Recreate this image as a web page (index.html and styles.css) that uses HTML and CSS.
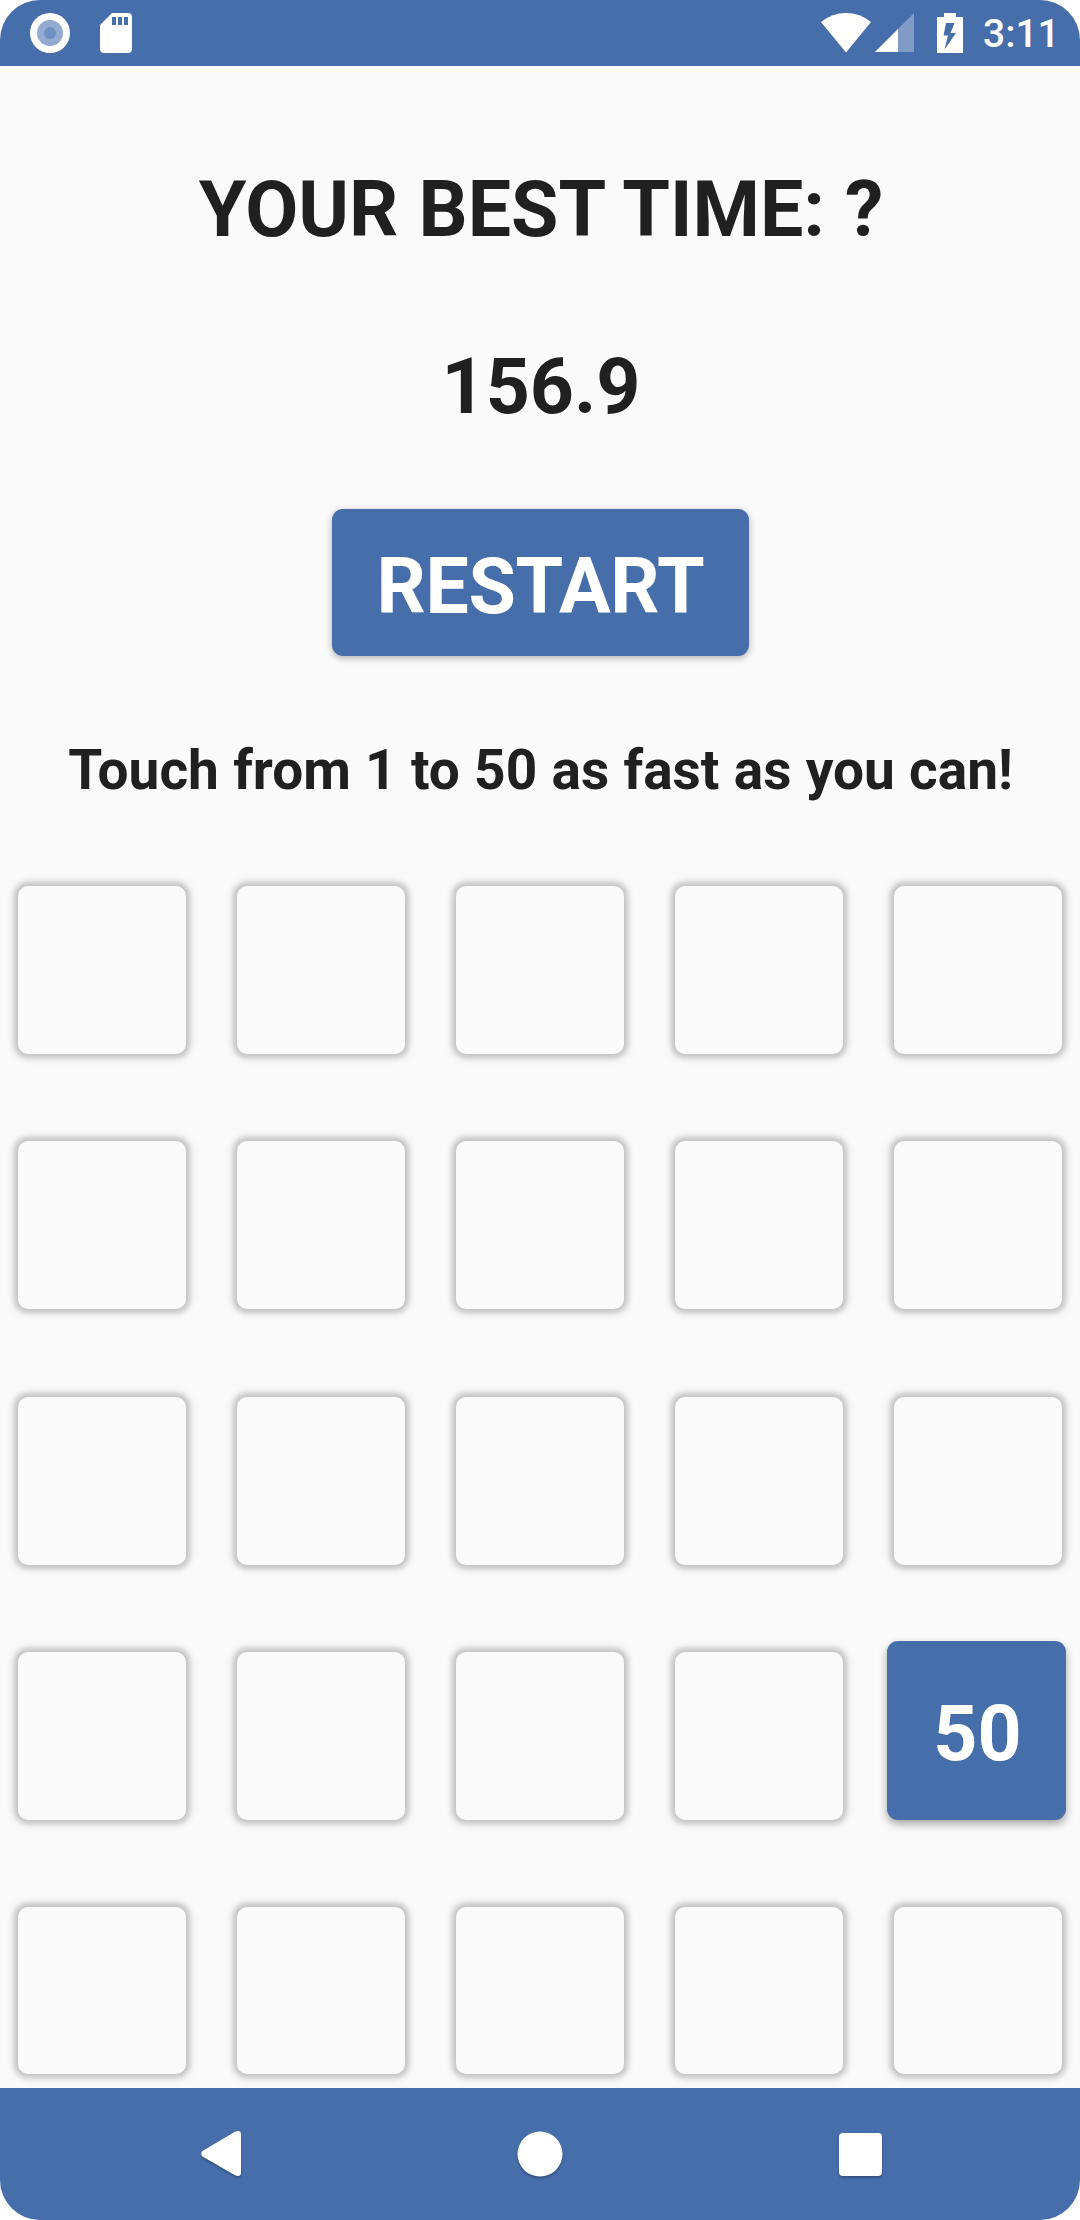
FILE: index.html
```html
<!DOCTYPE html>
<html lang="en">
<head>
<meta charset="utf-8">
<title>Touch 1 to 50</title>
<link rel="stylesheet" href="styles.css">
</head>
<body>
<div class="phone">
  <header class="status">
    <svg class="sync" width="40" height="40" viewBox="0 0 40 40"><circle cx="20" cy="20" r="20" fill="#fff"/><circle cx="20" cy="20" r="13" fill="#93abd0"/><circle cx="20" cy="20" r="6" fill="#7190c2"/></svg>
    <svg class="card" width="32" height="40" viewBox="0 0 32 40"><path fill="#fff" fill-rule="evenodd" d="M12 0H28a4 4 0 0 1 4 4V36a4 4 0 0 1-4 4H4a4 4 0 0 1-4-4V12ZM12 4v8h4V4ZM18 4v8h4V4ZM24 4v8h4V4Z"/></svg>
    <svg class="wifi" width="50" height="40" viewBox="0 0 50 40"><path fill="#fff" d="M0 9Q11 0 25 0T50 9L25 39.500Z"/></svg>
    <svg class="signal" width="39" height="39" viewBox="0 0 39 39"><path fill="#7f9bc6" d="M39 0V39H0Z"/><path fill="#fff" d="M23 16V39H0Z"/></svg>
    <svg class="battery" width="26" height="40" viewBox="0 0 26 40"><path fill="#fff" fill-rule="evenodd" d="M7 0H19V4H26V40H0V4H7ZM9 10 6.500 22.500H11L7.500 36.500 19 20H13.500L17.500 10Z"/></svg>
    <span class="clock">3:11</span>
  </header>
  <main class="game">
    <h1 class="best">YOUR BEST TIME: ?</h1>
    <div class="timer">156.9</div>
    <button class="restart">RESTART</button>
    <p class="hint">Touch from 1 to 50 as fast as you can!</p>
    <section class="board">
      <div class="row"><i class="tile"></i><i class="tile"></i><i class="tile"></i><i class="tile"></i><i class="tile"></i></div>
      <div class="row"><i class="tile"></i><i class="tile"></i><i class="tile"></i><i class="tile"></i><i class="tile"></i></div>
      <div class="row"><i class="tile"></i><i class="tile"></i><i class="tile"></i><i class="tile"></i><i class="tile"></i></div>
      <div class="row"><i class="tile"></i><i class="tile"></i><i class="tile"></i><i class="tile"></i><button class="number">50</button></div>
      <div class="row"><i class="tile"></i><i class="tile"></i><i class="tile"></i><i class="tile"></i><i class="tile"></i></div>
    </section>
  </main>
  <nav class="nav">
    <svg width="40" height="46" viewBox="0 0 40 46"><path fill="#fff" d="M1.500 20 34 .7Q40-1.500 40 3.500V41.500Q40 46.500 34 44.300L1.500 25.500Q-1 22.700 1.500 20Z"/></svg>
    <svg width="46" height="46" viewBox="0 0 46 46"><circle cx="23" cy="23" r="22.500" fill="#fff"/></svg>
    <svg width="43" height="43" viewBox="0 0 43 43"><rect width="43" height="43" rx="4" fill="#fff"/></svg>
  </nav>
</div>
</body>
</html>
```
FILE: styles.css
```css
* { box-sizing: border-box; }
body { margin: 0; background: #fff; font-family: Roboto, sans-serif; }
.phone { width: 1080px; height: 2220px; border-radius: 40px; overflow: hidden; background: #fafafa; display: flex; flex-direction: column; }
svg { display: block; flex: none; }
.status { height: 66px; flex: none; background: #466eab; display: flex; align-items: flex-start; padding: 13px 26px 0 30px; }
.card { margin-left: 30px; }
.wifi { margin-left: auto; }
.signal { margin-left: 4px; }
.battery { margin-left: 23px; }
.clock { width: 71px; margin-left: 20px; color: #fff; font-size: 39px; line-height: 43px; font-weight: 500; white-space: nowrap; }
.game { height: 2022px; flex: none; overflow: hidden; display: flex; flex-direction: column; align-items: center; color: #202020; font-weight: 700; }
.best, .timer { margin: 99px 0 0; padding-left: 2px; font-size: 77px; line-height: 90px; font-weight: 700; white-space: nowrap; word-spacing: 1px; }
.timer { margin-top: 87px; }
.restart { width: 417px; height: 147px; margin: 77px 0 0 1px; padding: 8px 0 0; flex: none; border: 0; border-radius: 11px; background: #466eab; color: #fff; font: 700 77px/90px Roboto, sans-serif; letter-spacing: -.35px; box-shadow: 0 2px 7px rgba(0,0,0,.3); }
.hint { margin: 82px 0 0; padding-left: 1px; font-size: 55px; line-height: 64px; white-space: nowrap; word-spacing: .6px; }
.board { width: 1080px; margin-top: 73px; padding: 0 14px 0 13px; display: grid; row-gap: 76.250px; }
.row { display: grid; grid-template-columns: repeat(5, 179px); column-gap: 40px; height: 179px; }
.tile { padding: 11px 6px 0 5px; }
.tile::before { content: ""; display: block; height: 168px; border-radius: 10px; background: #fafafa; box-shadow: 0 0 5px 4px rgba(0,0,0,.145), 0 0 10px 4px rgba(0,0,0,.1); }
.row:last-child .tile::before { height: 167px; }
.number { width: 179px; height: 179px; margin-left: -2px; border: 0; padding: 8px 0 0 2px; border-radius: 11px; background: #466eab; color: #fff; font: 700 77px/90px Roboto, sans-serif; box-shadow: 0 4px 8px rgba(0,0,0,.35); }
.nav { height: 132px; flex: none; background: #466eab; display: flex; align-items: center; justify-content: space-between; padding: 0 198px 0 201px; }
.nav svg { filter: drop-shadow(0 2px 1px rgba(0,0,0,.25)); }
```
